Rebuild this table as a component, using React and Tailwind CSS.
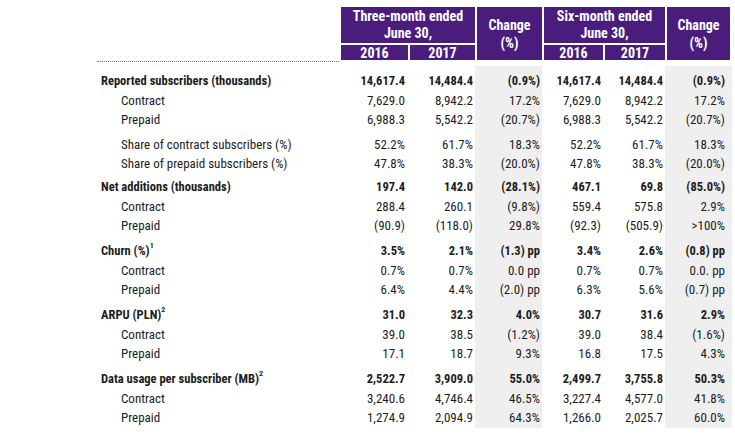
import React from 'react';

const cols = 'grid grid-cols-[341px_67px_67px_67px_61px_62px_67px]';

// label, values [3m16, 3m17, chg, 6m16, 6m17, chg], bold, indent, sup
const groups = [
  {
    pt: 'pt-[6px]',
    rows: [
      { label: 'Reported subscribers (thousands)', bold: true, v: ['14,617.4', '14,484.4', '(0.9%)', '14,617.4', '14,484.4', '(0.9%)'] },
      { label: 'Contract', v: ['7,629.0', '8,942.2', '17.2%', '7,629.0', '8,942.2', '17.2%'] },
      { label: 'Prepaid', v: ['6,988.3', '5,542.2', '(20.7%)', '6,988.3', '5,542.2', '(20.7%)'] },
    ],
  },
  {
    pt: 'pt-[6px]',
    rows: [
      { label: 'Share of contract subscribers (%)', v: ['52.2%', '61.7%', '18.3%', '52.2%', '61.7%', '18.3%'] },
      { label: 'Share of prepaid subscribers (%)', v: ['47.8%', '38.3%', '(20.0%)', '47.8%', '38.3%', '(20.0%)'] },
    ],
  },
  {
    pt: 'pt-[5px]',
    rows: [
      { label: 'Net additions (thousands)', bold: true, v: ['197.4', '142.0', '(28.1%)', '467.1', '69.8', '(85.0%)'] },
      { label: 'Contract', v: ['288.4', '260.1', '(9.8%)', '559.4', '575.8', '2.9%'] },
      { label: 'Prepaid', v: ['(90.9)', '(118.0)', '29.8%', '(92.3)', '(505.9)', '>100%'] },
    ],
  },
  {
    pt: 'pt-[7px]',
    rows: [
      { label: 'Churn (%)', sup: '1', bold: true, v: ['3.5%', '2.1%', '(1.3) pp', '3.4%', '2.6%', '(0.8) pp'] },
      { label: 'Contract', v: ['0.7%', '0.7%', '0.0 pp', '0.7%', '0.7%', '0.0. pp'] },
      { label: 'Prepaid', v: ['6.4%', '4.4%', '(2.0) pp', '6.3%', '5.6%', '(0.7) pp'] },
    ],
  },
  {
    pt: 'pt-[7px]',
    rows: [
      { label: 'ARPU (PLN)', sup: '2', bold: true, v: ['31.0', '32.3', '4.0%', '30.7', '31.6', '2.9%'] },
      { label: 'Contract', v: ['39.0', '38.5', '(1.2%)', '39.0', '38.4', '(1.6%)'] },
      { label: 'Prepaid', v: ['17.1', '18.7', '9.3%', '16.8', '17.5', '4.3%'] },
    ],
  },
  {
    pt: 'pt-[7px]',
    rows: [
      { label: 'Data usage per subscriber (MB)', sup: '2', bold: true, v: ['2,522.7', '3,909.0', '55.0%', '2,499.7', '3,755.8', '50.3%'] },
      { label: 'Contract', v: ['3,240.6', '4,746.4', '46.5%', '3,227.4', '4,577.0', '41.8%'] },
      { label: 'Prepaid', v: ['1,274.9', '2,094.9', '64.3%', '1,266.0', '2,025.7', '60.0%'] },
    ],
  },
];

const cellPad = ['pr-[3px]', 'pr-[2px]', 'pr-[2px]', 'pr-[2px]', 'pr-[2px]', 'pr-[7px]'];

const Row = ({ row, pt, last }) => (
  <div className={`${cols} leading-none ${row.bold ? 'font-bold text-[12.5px]' : 'text-[13px]'}`}>
    <div className={`flex items-end h-full ${pt || ''} ${last ? 'pb-px' : ''}`}>
      <div className={`h-[19px] flex items-center ${row.bold ? 'pl-[101px]' : 'pl-[121px]'}`}>
        {row.label}
        {row.sup && <sup className="text-[8px] -top-[6px]">{row.sup}</sup>}
      </div>
    </div>
    {row.v.map((val, i) => (
      <div
        key={i}
        className={`flex items-end justify-end ${pt || ''} ${last ? 'pb-px' : ''} ${cellPad[i]} ${i === 2 || i === 5 ? 'bg-[#efefef]' : ''}`}
      >
        <div className="h-[19px] flex items-center">{val}</div>
      </div>
    ))}
  </div>
);

const Head = ({ children, className = '' }) => (
  <div className={`bg-[#4a1d7d] text-white font-bold flex items-center justify-center text-center text-[14px] ${className}`}>
    {children}
  </div>
);

export default function App() {
  return (
    <div
      className="w-[735px] h-[434px] bg-white text-[#1c1c1c] overflow-hidden"
      style={{ fontFamily: '"Roboto Condensed", "Liberation Sans Narrow", "DejaVu Sans Condensed", sans-serif' }}
    >
      <div className={`${cols} grid-rows-[36px_17px] mt-[7px]`}>
        <div className="row-span-2 flex flex-col justify-end">
          <div className="ml-[97px] mr-[2px] border-b border-dotted border-[#777] -mb-[2px]" />
        </div>
        <Head className="col-span-2 flex-col leading-[17px]">
          <span>Three-month ended</span>
          <span>June 30,</span>
        </Head>
        <Head className="row-span-2 flex-col leading-[18px] border-l-2 border-white">
          <span>Change</span>
          <span>(%)</span>
        </Head>
        <Head className="col-span-2 flex-col leading-[17px] border-l-2 border-white">
          <span>Six-month ended</span>
          <span>June 30,</span>
        </Head>
        <Head className="row-span-2 flex-col leading-[18px] border-l-2 border-white mr-[2px]">
          <span>Change</span>
          <span>(%)</span>
        </Head>
        <Head className="border-t-2 border-white leading-none">2016</Head>
        <Head className="border-t-2 border-l-2 border-white leading-none">2017</Head>
        <Head className="border-t-2 border-l-2 border-white leading-none">2016</Head>
        <Head className="border-t-2 border-l-2 border-white leading-none">2017</Head>
      </div>

      <div className="mt-[6px]">
        {groups.map((g, gi) =>
          g.rows.map((row, ri) => (
            <Row
              key={`${gi}-${ri}`}
              row={row}
              pt={ri === 0 ? g.pt : ''}
              last={gi === groups.length - 1 && ri === g.rows.length - 1}
            />
          ))
        )}
      </div>
    </div>
  );
}
